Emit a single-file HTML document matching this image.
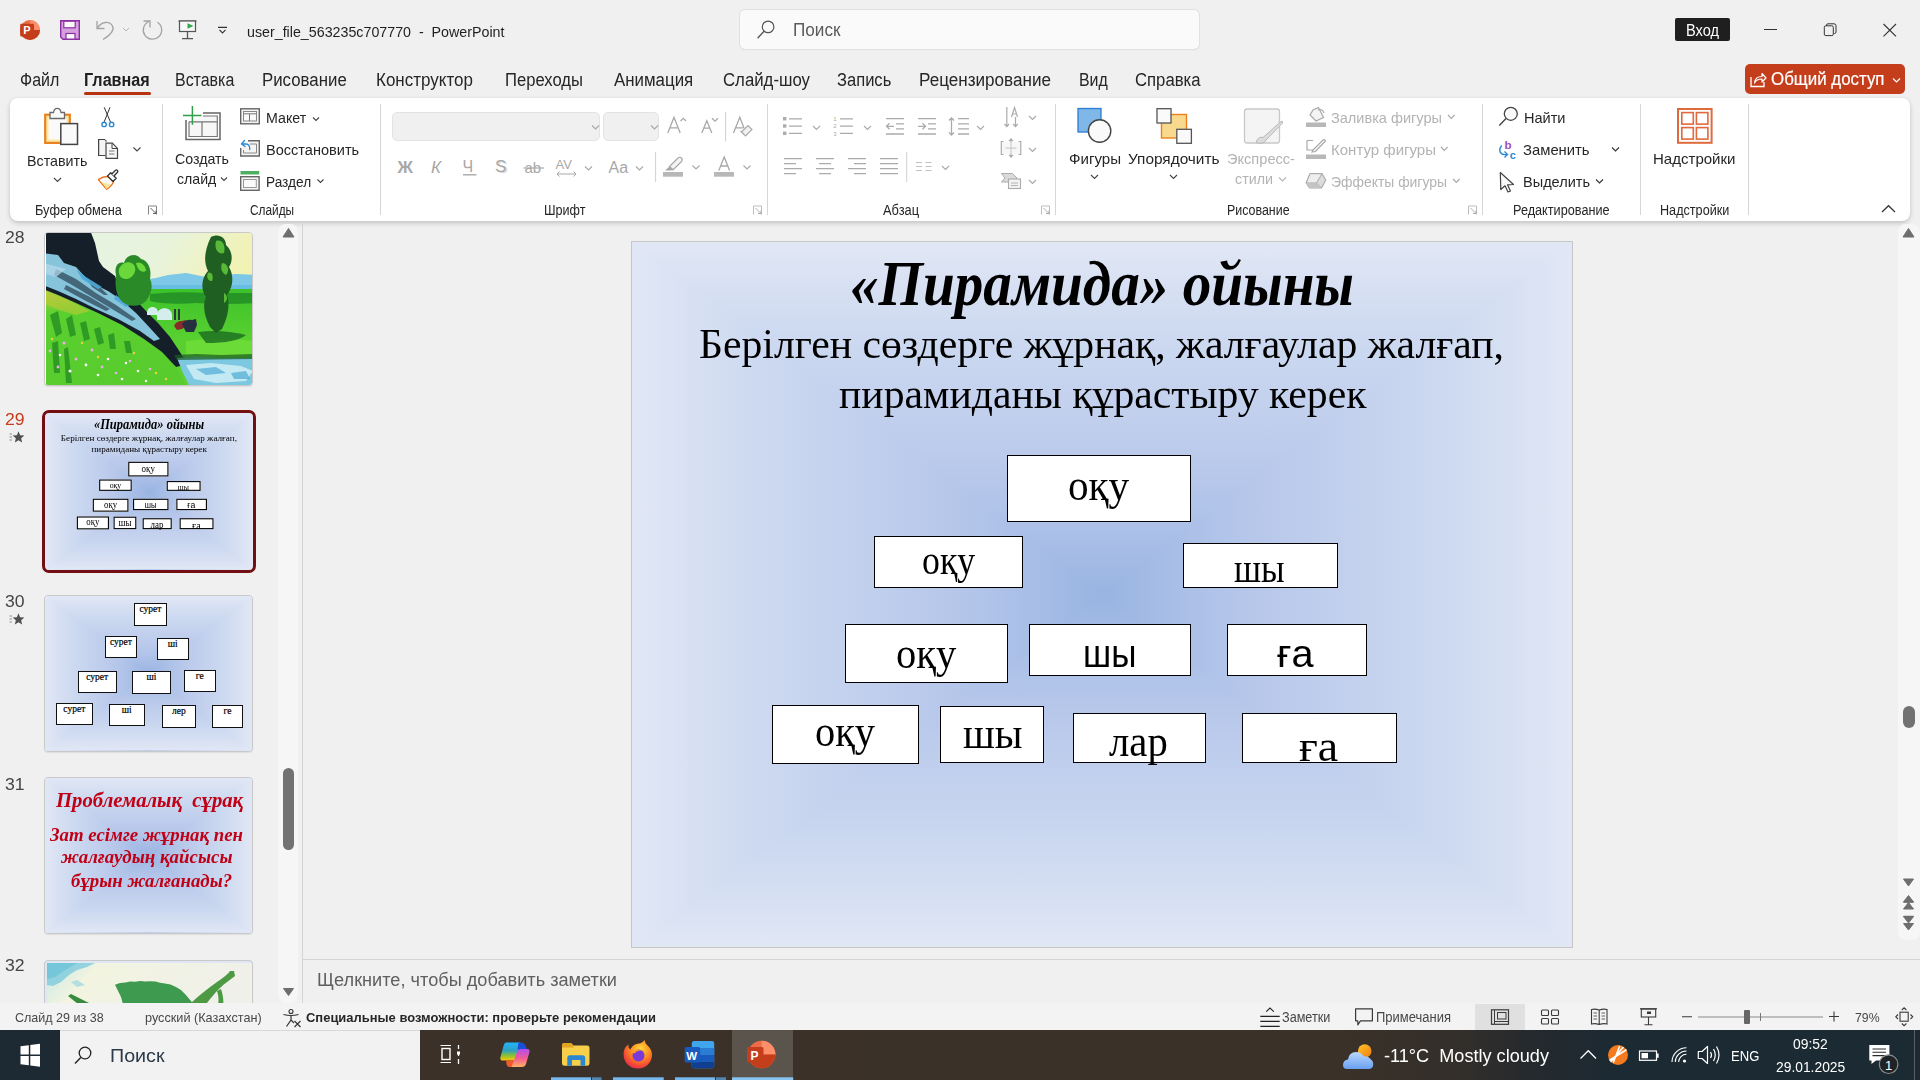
<!DOCTYPE html>
<html><head><meta charset="utf-8">
<style>
html,body{margin:0;padding:0;}
body{width:1920px;height:1080px;overflow:hidden;position:relative;background:#f0f0f0;font-family:'Liberation Sans',sans-serif;}
.t{position:absolute;white-space:nowrap;line-height:1;transform-origin:0 0;}
.a{position:absolute;}
svg.a{overflow:visible;}
</style></head><body>
<div class="a" style="left:740px;top:10px;width:459px;height:39px;background:#fafafa;border-radius:5px;box-shadow:0 0 0 1px #e1e1e1, 0 1px 1px #d0d0d0;"></div>
<div class="a" style="left:1675px;top:18px;width:55px;height:23px;background:#1f1f1f;border-radius:2px;"></div>
<div class="a" style="left:84px;top:92px;width:67px;height:3px;background:#b7320f;border-radius:2px;"></div>
<div class="a" style="left:1745px;top:64px;width:160px;height:30px;background:#c43e1c;border-radius:5px;"></div>
<div class="a" style="left:10px;top:98px;width:1900px;height:123px;background:#fff;border-radius:8px;box-shadow:0 2px 5px rgba(0,0,0,0.2);"></div>
<div class="a" style="left:162.0px;top:104px;width:1px;height:111px;background:#d6d6d6;"></div>
<div class="a" style="left:379.5px;top:104px;width:1px;height:111px;background:#d6d6d6;"></div>
<div class="a" style="left:767.0px;top:104px;width:1px;height:111px;background:#d6d6d6;"></div>
<div class="a" style="left:1055.0px;top:104px;width:1px;height:111px;background:#d6d6d6;"></div>
<div class="a" style="left:1481.5px;top:104px;width:1px;height:111px;background:#d6d6d6;"></div>
<div class="a" style="left:1640.0px;top:104px;width:1px;height:111px;background:#d6d6d6;"></div>
<div class="a" style="left:1747.5px;top:104px;width:1px;height:111px;background:#d6d6d6;"></div>
<div class="a" style="left:391.5px;top:112px;width:208px;height:29px;background:#f0f0f0;border:1px solid #e3e3e3;border-radius:5px;box-sizing:border-box;"></div>
<div class="a" style="left:602.5px;top:112px;width:56px;height:29px;background:#f0f0f0;border:1px solid #e3e3e3;border-radius:5px;box-sizing:border-box;"></div>
<div class="a" style="left:278px;top:224px;width:20px;height:779px;background:#f6f6f6;border-radius:8px;"></div>
<div class="a" style="left:302px;top:224px;width:1px;height:779px;background:#d4d4d4;"></div>
<div class="a" style="left:283px;top:768px;width:11px;height:82px;background:#727272;border-radius:5.5px;"></div>
<div class="a" style="left:1898px;top:224px;width:22px;height:716px;background:#f6f6f6;border-radius:8px;"></div>
<div class="a" style="left:1903px;top:706px;width:12px;height:22px;background:#727272;border-radius:6px;"></div>
<div class="a" style="left:303px;top:958.5px;width:1617px;height:1.5px;background:#d4d4d4;"></div>
<div class="a" style="left:0;top:1003px;width:1920px;height:27px;background:#f3f3f3;"></div>
<div class="a" style="left:1475px;top:1004px;width:50px;height:26px;background:#e0e0e0;"></div>
<div class="a" style="left:0;top:1030px;width:1920px;height:50px;background:linear-gradient(90deg,#3b3129 0%,#3b3129 40%,#3a3128 70%,#332f2b 76%,#24292d 80%,#1c2a33 84%,#1c2a33 100%);"></div>
<div class="a" style="left:0;top:1030px;width:60px;height:50px;background:#1e2a33;"></div>
<div class="a" style="left:60px;top:1030px;width:360px;height:50px;background:#f2f2f2;border-top:1px solid #d8d8d8;box-sizing:border-box;"></div>
<div class="a" style="left:732px;top:1030px;width:61px;height:50px;background:#5b544d;"></div>
<div class="a" style="left:44px;top:231.5px;width:208.7px;height:154.0px;border:1px solid #c9c9c9;border-radius:4px;box-sizing:border-box;overflow:hidden;background:#fff;box-shadow:0 1px 1px rgba(0,0,0,0.08);"><div class="a" style="left:0.5px;top:0.5px;width:207px;height:153px;"><svg width="207" height="153" viewBox="0 0 207 153" style="position:absolute;left:0;top:0;filter:blur(0.45px)">
<defs>
<linearGradient id="sky" x1="0" y1="0" x2="1" y2="0.5"><stop offset="0" stop-color="#e4f4e4"/><stop offset="0.5" stop-color="#e8f3dc"/><stop offset="0.8" stop-color="#f1f2b8"/><stop offset="1" stop-color="#f2f0a8"/></linearGradient>
<linearGradient id="mead" x1="0" y1="0" x2="0" y2="1"><stop offset="0" stop-color="#3cc22a"/><stop offset="0.5" stop-color="#58d030"/><stop offset="1" stop-color="#60d030"/></linearGradient>
<linearGradient id="gr" x1="0" y1="0" x2="0.3" y2="1"><stop offset="0" stop-color="#b0d040"/><stop offset="0.25" stop-color="#5ad030"/><stop offset="1" stop-color="#58cc2c"/></linearGradient>
<filter id="soft" x="-5%" y="-5%" width="110%" height="110%"><feGaussianBlur stdDeviation="0.7"/></filter>
</defs>
<g>
<rect x="-3" y="-3" width="213" height="160" fill="url(#sky)"/>
<path d="M95 47 L110 45 L122 42 L140 40 L160 44 L175 42 L190 41 L210 42 L210 58 L95 58Z" fill="#7cc8e6"/>
<path d="M95 52 L210 52 L210 58 L95 58Z" fill="#5ab8e0" opacity="0.6"/>
<path d="M90 56 L210 56 L210 156 L90 156Z" fill="url(#mead)"/>
<path d="M104 61 Q130 58 160 60 L210 60 L210 70 Q180 72 150 70 Q120 72 104 68Z" fill="#1f8a26" opacity="0.8"/>
<path d="M140 108 Q175 104 210 108 L210 124 L140 124Z" fill="#74e03a" opacity="0.7"/>
<path d="M152 99 Q175 96 200 102 Q190 110 160 110Z" fill="#1a6a22" opacity="0.8"/>
<path d="M-3 -3 L44 -3 L49 10 L53 28 L57 34 L69 43 L73 54 L85 62 L100 78 L112 90 L124 104 L132 116 L137 124 L142 131 L130 134 L112 120 L88 104 L62 90 L36 78 L12 68 L-3 64Z" fill="#151f2a"/>
<path d="M-3 20 L12 22 L18 30 L30 34 L40 45 L50 52 L62 58 L74 66 L90 80 L104 95 L114 106 L108 108 L94 98 L72 86 L50 76 L30 66 L12 58 L-3 52Z" fill="#86c4dc"/>
<path d="M10 36 L30 46 L50 60 L70 72 L90 86 L86 88 L66 76 L46 64 L26 52 L8 42Z M20 52 L44 64 L64 76 L60 78 L40 68 L18 56Z M40 44 L52 52 L62 62 L58 62 L46 54Z" fill="#2a4050" opacity="0.7"/><path d="M-3 30 L20 36 L10 44 L-3 40Z" fill="#b8dcec" opacity="0.7"/>
<path d="M30 36 L40 44 L56 54 L52 56 L36 46Z M70 62 L84 72 L80 74 L68 66Z" fill="#4aa8d8" opacity="0.9"/>
<path d="M-3 56 L12 62 L30 70 L52 80 L76 92 L98 106 L116 119 L130 134 L136 145 L142 156 L-3 156Z" fill="url(#gr)"/>
<path d="M-3 58 L20 66 L44 78 L30 82 L10 76 L-3 70Z" fill="#c8c838" opacity="0.55"/>
<path d="M4 82 L12 78 L16 100 L10 104Z M20 86 L26 82 L30 102 L24 104Z M34 90 L40 88 L44 106 L38 108Z M48 96 L54 94 L58 110 L52 112Z M62 102 L68 100 L70 116 L64 116Z M78 108 L84 108 L86 120 L80 120Z M6 110 L12 108 L14 140 L8 140Z M18 116 L22 114 L26 150 L20 150Z" fill="#228a22" opacity="0.75"/>
<path d="M70 42 C68 34 72 28 78 30 C80 22 90 19 95 26 C102 27 106 36 104 46 C108 54 104 62 100 68 C94 74 84 74 78 70 C72 66 68 56 70 42Z" fill="#2a8a28"/>
<path d="M73 36 C76 29 84 27 88 32 C92 38 86 46 80 46 C75 46 72 42 73 36Z M90 30 C94 28 100 32 100 38 C96 40 92 38 90 30Z" fill="#6ad83a"/>
<path d="M101 80 C101 72 112 72 112 80 L112 82 L101 82Z M111 82 C111 73 126 73 126 82 L126 87 L111 87Z" fill="#d4eeee"/>
<path d="M128 76 H130 V87 H128Z M132 76 H134 V87 H132Z" fill="#2a3a3a"/>
<path d="M128 93 Q130 88 136 88 L140 87 L141 93 L136 96 L131 97Z" fill="#8a2a2a"/>
<path d="M136 91 Q140 86 146 87 L150 86 L151 92 L148 99 L140 99Z" fill="#253040"/>
<path d="M165 4 C172 0 180 4 180 12 C187 18 187 28 183 34 C189 44 186 56 181 62 C185 74 180 88 176 96 L170 100 L164 94 C159 84 156 74 160 64 C154 56 156 44 162 38 C157 28 159 16 165 4Z" fill="#1f5f22"/>
<path d="M170 8 C176 6 180 12 178 20 C172 22 168 16 170 8Z M176 30 C182 30 184 38 180 42 C176 40 174 36 176 30Z M162 40 C166 38 168 44 166 48 C162 48 160 44 162 40Z M178 60 C182 62 182 68 178 70Z" fill="#58b838"/>
<path d="M131 125 L150 124 L175 125 L210 125 L210 156 L145 156 L137 140Z" fill="#7cc8e0"/>
<path d="M140 132 L165 130 L195 133 L207 138 L200 148 L170 150 L148 146Z" fill="#d0eef6" opacity="0.85"/>
<path d="M150 136 L170 134 L180 140 L160 142Z M185 140 L200 138 L204 146 L188 146Z" fill="#3aa0d0" opacity="0.6"/>
<path d="M128 122 L150 121 L175 122 L207 121 L207 126 L131 127Z" fill="#1a5a22" opacity="0.7"/>
</g>
<g fill="#e8b0e8"><circle cx="18" cy="110" r="1.6"/><circle cx="30" cy="126" r="1.5"/><circle cx="46" cy="117" r="1.4"/><circle cx="56" cy="134" r="1.4"/><circle cx="70" cy="140" r="1.3"/><circle cx="12" cy="134" r="1.4"/><circle cx="84" cy="128" r="1.3"/><circle cx="4" cy="118" r="1.4"/><circle cx="104" cy="136" r="1.3"/></g>
<g fill="#ffffff"><circle cx="24" cy="138" r="1.5"/><circle cx="40" cy="132" r="1.4"/><circle cx="62" cy="126" r="1.3"/><circle cx="76" cy="146" r="1.3"/><circle cx="92" cy="138" r="1.3"/><circle cx="100" cy="148" r="1.2"/><circle cx="14" cy="122" r="1.3"/><circle cx="52" cy="142" r="1.3"/><circle cx="80" cy="130" r="1.2"/></g>
<g fill="#f0d040"><circle cx="36" cy="110" r="1.2"/><circle cx="52" cy="124" r="1.2"/><circle cx="88" cy="120" r="1.2"/><circle cx="110" cy="140" r="1.2"/><circle cx="6" cy="106" r="1.2"/><circle cx="120" cy="146" r="1.2"/></g>
</svg></div></div>
<div class="a" style="left:0;top:900px;width:270px;height:103px;overflow:hidden;"><div class="a" style="left:0;top:-900px;"><div class="a" style="left:44px;top:959.5px;width:208.7px;height:50.5px;border:1px solid #c9c9c9;border-radius:4px;box-sizing:border-box;overflow:hidden;background:#dfe6f4;box-shadow:0 1px 1px rgba(0,0,0,0.08);"><div class="a" style="left:2px;top:2px;width:206px;height:45px;"><svg width="206" height="45" viewBox="0 0 206 45" style="position:absolute;left:0;top:0">
<defs><linearGradient id="lsky" x1="0" y1="0" x2="1" y2="0.2"><stop offset="0" stop-color="#c8e8e8"/><stop offset="0.25" stop-color="#f2f4e0"/><stop offset="1" stop-color="#f0f0ea"/></linearGradient></defs>
<rect width="206" height="45" fill="url(#lsky)"/>
<path d="M0 0 L48 0 L40 4 L30 7 L22 12 L14 19 L6 23 L0 22Z" fill="#78c8dc" opacity="0.75"/><path d="M0 0 L30 0 L20 6 L8 14 L0 16Z" fill="#5cbcd6" opacity="0.5"/>
<path d="M24 19 L30 17 L38 22 L30 24Z" fill="#9ad6e0" opacity="0.7"/>
<path d="M68 21.7 L73 20 L78.5 19.5 L83 18.5 L88 18.8 L93.5 18 L98 18.6 L103 18.3 L108.5 18.5 L113 19.8 L118 20.4 L123.5 21.5 L129 24 L134 27 L138.5 31.5 L144.8 38.9 L147 45 L77 45 L74 34Z" fill="#3e9a4e"/>
<path d="M142 42 C150 34 160 26 170 19 C176 15 181 11 183 8 L187 8 L188 13 C184 16 178 20 172 26 C166 32 160 40 156 45 L146 45Z" fill="#4e9a44"/>
<path d="M170 28 C172 34 172 40 170 45 L176 45 C177 38 176 32 174 26Z" fill="#4e9a44"/>
<path d="M21 33 L24 31 L44 41 L42 45 L36 45Z" fill="#3a8a40"/>
</svg></div></div></div></div>
<div class="a" style="left:44px;top:595px;width:208.7px;height:156.5px;border:1px solid #c9c9c9;border-radius:4px;box-sizing:border-box;overflow:hidden;background:#e1e7f5;box-shadow:0 1px 1px rgba(0,0,0,0.08);"><div class="a" style="left:0;top:0;right:0;bottom:0;background:linear-gradient(90deg,#e1e7f5 0.0%,#cbd8f0 15.0%,#bccbec 30.0%,#adc1e8 40.0%,#99b4e2 50.0%,#adc1e8 60.0%,#bccbec 70.0%,#cbd8f0 85.0%,#e1e7f5 100.0%);"></div><div class="a" style="left:0;top:0;right:0;bottom:0;background:linear-gradient(180deg,#e1e7f5 0.0%,#cbd8f0 15.0%,#bccbec 30.0%,#adc1e8 40.0%,#99b4e2 50.0%,#adc1e8 60.0%,#bccbec 70.0%,#cbd8f0 85.0%,#e1e7f5 100.0%);clip-path:polygon(0 0,100% 0,50% 50%,100% 100%,0 100%,50% 50%);"></div><div class="a" style="left:88.9px;top:6.9px;width:33.0px;height:23.1px;background:#fff;border:1px solid #111;box-sizing:border-box;font:9.5px/1 'Liberation Serif',serif;color:#000;text-align:center;padding-top:1px;-webkit-text-stroke:0.2px #000;">сурет</div><div class="a" style="left:59.8px;top:40.0px;width:32.2px;height:21.8px;background:#fff;border:1px solid #111;box-sizing:border-box;font:9.5px/1 'Liberation Serif',serif;color:#000;text-align:center;padding-top:1px;-webkit-text-stroke:0.2px #000;">сурет</div><div class="a" style="left:111.5px;top:42.0px;width:32.3px;height:21.8px;background:#fff;border:1px solid #111;box-sizing:border-box;font:9.5px/1 'Liberation Serif',serif;color:#000;text-align:center;padding-top:1px;-webkit-text-stroke:0.2px #000;">шi</div><div class="a" style="left:32.7px;top:74.6px;width:39.0px;height:22.7px;background:#fff;border:1px solid #111;box-sizing:border-box;font:9.5px/1 'Liberation Serif',serif;color:#000;text-align:center;padding-top:1px;-webkit-text-stroke:0.2px #000;">сурет</div><div class="a" style="left:86.9px;top:75.4px;width:39.0px;height:23.1px;background:#fff;border:1px solid #111;box-sizing:border-box;font:9.5px/1 'Liberation Serif',serif;color:#000;text-align:center;padding-top:1px;-webkit-text-stroke:0.2px #000;">шi</div><div class="a" style="left:138.6px;top:73.8px;width:32.3px;height:22.7px;background:#fff;border:1px solid #111;box-sizing:border-box;font:9.5px/1 'Liberation Serif',serif;color:#000;text-align:center;padding-top:1px;-webkit-text-stroke:0.2px #000;">ге</div><div class="a" style="left:10.8px;top:107.2px;width:37.1px;height:21.9px;background:#fff;border:1px solid #111;box-sizing:border-box;font:9.5px/1 'Liberation Serif',serif;color:#000;text-align:center;padding-top:1px;-webkit-text-stroke:0.2px #000;">сурет</div><div class="a" style="left:63.8px;top:108.4px;width:35.8px;height:21.9px;background:#fff;border:1px solid #111;box-sizing:border-box;font:9.5px/1 'Liberation Serif',serif;color:#000;text-align:center;padding-top:1px;-webkit-text-stroke:0.2px #000;">шi</div><div class="a" style="left:116.7px;top:109.2px;width:34.3px;height:23.1px;background:#fff;border:1px solid #111;box-sizing:border-box;font:9.5px/1 'Liberation Serif',serif;color:#000;text-align:center;padding-top:1px;-webkit-text-stroke:0.2px #000;">лер</div><div class="a" style="left:166.9px;top:109.2px;width:31.4px;height:23.1px;background:#fff;border:1px solid #111;box-sizing:border-box;font:9.5px/1 'Liberation Serif',serif;color:#000;text-align:center;padding-top:1px;-webkit-text-stroke:0.2px #000;">ге</div></div>
<div class="a" style="left:44px;top:777px;width:208.7px;height:156.5px;border:1px solid #c9c9c9;border-radius:4px;box-sizing:border-box;overflow:hidden;background:#e1e7f5;box-shadow:0 1px 1px rgba(0,0,0,0.08);"><div class="a" style="left:0;top:0;right:0;bottom:0;background:linear-gradient(90deg,#e1e7f5 0.0%,#cbd8f0 15.0%,#bccbec 30.0%,#adc1e8 40.0%,#99b4e2 50.0%,#adc1e8 60.0%,#bccbec 70.0%,#cbd8f0 85.0%,#e1e7f5 100.0%);"></div><div class="a" style="left:0;top:0;right:0;bottom:0;background:linear-gradient(180deg,#e1e7f5 0.0%,#cbd8f0 15.0%,#bccbec 30.0%,#adc1e8 40.0%,#99b4e2 50.0%,#adc1e8 60.0%,#bccbec 70.0%,#cbd8f0 85.0%,#e1e7f5 100.0%);clip-path:polygon(0 0,100% 0,50% 50%,100% 100%,0 100%,50% 50%);"></div></div>
<div class="a" style="left:631px;top:241px;width:942px;height:707px;border:1px solid #c6c6c6;box-sizing:border-box;overflow:hidden;"><div class="a" style="left:-1px;top:-1px;width:942px;height:707px;"><div class="a" style="left:0;top:0;right:0;bottom:0;background:linear-gradient(90deg,#e1e7f5 0.0%,#cbd8f0 15.0%,#bccbec 30.0%,#adc1e8 40.0%,#99b4e2 50.0%,#adc1e8 60.0%,#bccbec 70.0%,#cbd8f0 85.0%,#e1e7f5 100.0%);"></div><div class="a" style="left:0;top:0;right:0;bottom:0;background:linear-gradient(180deg,#e1e7f5 0.0%,#cbd8f0 15.0%,#bccbec 30.0%,#adc1e8 40.0%,#99b4e2 50.0%,#adc1e8 60.0%,#bccbec 70.0%,#cbd8f0 85.0%,#e1e7f5 100.0%);clip-path:polygon(0 0,100% 0,50% 50%,100% 100%,0 100%,50% 50%);"></div><div class="a" style="left:376.20000000000005px;top:214px;width:183.5px;height:66.5px;background:#fff;border:1.5px solid #000;box-sizing:border-box;"></div><div class="a" style="left:243px;top:295px;width:148.60000000000002px;height:51.799999999999955px;background:#fff;border:1.5px solid #000;box-sizing:border-box;"></div><div class="a" style="left:552px;top:302px;width:154.5px;height:44.799999999999955px;background:#fff;border:1.5px solid #000;box-sizing:border-box;"></div><div class="a" style="left:214px;top:383px;width:162.5px;height:59.39999999999998px;background:#fff;border:1.5px solid #000;box-sizing:border-box;"></div><div class="a" style="left:398px;top:383px;width:161.70000000000005px;height:51.5px;background:#fff;border:1.5px solid #000;box-sizing:border-box;"></div><div class="a" style="left:595.8px;top:383px;width:139.9000000000001px;height:51.5px;background:#fff;border:1.5px solid #000;box-sizing:border-box;"></div><div class="a" style="left:141px;top:464px;width:146.79999999999995px;height:58.5px;background:#fff;border:1.5px solid #000;box-sizing:border-box;"></div><div class="a" style="left:309px;top:464.5px;width:103.75px;height:57.5px;background:#fff;border:1.5px solid #000;box-sizing:border-box;"></div><div class="a" style="left:442px;top:471.5px;width:132.75px;height:50.5px;background:#fff;border:1.5px solid #000;box-sizing:border-box;"></div><div class="a" style="left:611px;top:471.5px;width:154.5px;height:50.5px;background:#fff;border:1.5px solid #000;box-sizing:border-box;"></div><div class="t" id="t57" style="left:219.00px;top:11.71px;font-size:63px;font-family:'Liberation Serif', serif;color:#000;font-weight:700;font-style:italic;transform:scaleX(0.9070);">«Пирамида» ойыны</div><div class="t" id="t58" style="left:68.00px;top:81.64px;font-size:42px;font-family:'Liberation Serif', serif;color:#000;transform:scaleX(0.9929);">Берілген сөздерге жұрнақ, жалғаулар жалғап,</div><div class="t" id="t59" style="left:207.50px;top:131.64px;font-size:42px;font-family:'Liberation Serif', serif;color:#000;transform:scaleX(0.9932);">пирамиданы құрастыру керек</div><div class="t" id="t60" style="left:436.70px;top:221.65px;font-size:45px;font-family:'Liberation Serif', serif;color:#000;transform:scaleX(0.9151);">оқу</div><div class="t" id="t61" style="left:290.60px;top:298.97px;font-size:41px;font-family:'Liberation Serif', serif;color:#000;transform:scaleX(0.8732);">оқу</div><div class="t" id="t62" style="left:603.40px;top:306.14px;font-size:42px;font-family:'Liberation Serif', serif;color:#000;transform:scaleX(0.8355);">шы</div><div class="t" id="t63" style="left:264.80px;top:390.25px;font-size:45px;font-family:'Liberation Serif', serif;color:#000;transform:scaleX(0.9002);">оқу</div><div class="t" id="t64" style="left:452.00px;top:392.75px;font-size:39px;font-family:'Liberation Sans', sans-serif;color:#000;transform:scaleX(0.9001);">шы</div><div class="t" id="t65" style="left:646.40px;top:392.75px;font-size:39px;font-family:'Liberation Sans', sans-serif;color:#000;transform:scaleX(1.0189);">ға</div><div class="t" id="t66" style="left:184.00px;top:469.48px;font-size:44px;font-family:'Liberation Serif', serif;color:#000;transform:scaleX(0.9176);">оқу</div><div class="t" id="t67" style="left:331.50px;top:470.40px;font-size:45px;font-family:'Liberation Serif', serif;color:#000;transform:scaleX(0.9169);">шы</div><div class="t" id="t68" style="left:477.75px;top:478.89px;font-size:43.5px;font-family:'Liberation Serif', serif;color:#000;transform:scaleX(0.9360);">лар</div><div class="t" id="t69" style="left:667.75px;top:482.90px;font-size:45px;font-family:'Liberation Serif', serif;color:#000;transform:scaleX(1.0211);">ға</div></div></div>
<div class="a" style="left:41.5px;top:410px;width:214px;height:162.5px;border:3px solid #730f12;border-radius:7px;box-sizing:border-box;overflow:hidden;background:#e1e7f5;"><div class="a" style="left:1px;top:1.5px;width:942px;height:707px;transform:scale(0.21868);transform-origin:0 0;"><div class="a" style="left:0;top:0;right:0;bottom:0;background:linear-gradient(90deg,#e1e7f5 0.0%,#cbd8f0 15.0%,#bccbec 30.0%,#adc1e8 40.0%,#99b4e2 50.0%,#adc1e8 60.0%,#bccbec 70.0%,#cbd8f0 85.0%,#e1e7f5 100.0%);"></div><div class="a" style="left:0;top:0;right:0;bottom:0;background:linear-gradient(180deg,#e1e7f5 0.0%,#cbd8f0 15.0%,#bccbec 30.0%,#adc1e8 40.0%,#99b4e2 50.0%,#adc1e8 60.0%,#bccbec 70.0%,#cbd8f0 85.0%,#e1e7f5 100.0%);clip-path:polygon(0 0,100% 0,50% 50%,100% 100%,0 100%,50% 50%);"></div><div class="a" style="left:376.20000000000005px;top:214px;width:183.5px;height:66.5px;background:#fff;border:5px solid #000;box-sizing:border-box;"></div><div class="a" style="left:243px;top:295px;width:148.60000000000002px;height:51.799999999999955px;background:#fff;border:5px solid #000;box-sizing:border-box;"></div><div class="a" style="left:552px;top:302px;width:154.5px;height:44.799999999999955px;background:#fff;border:5px solid #000;box-sizing:border-box;"></div><div class="a" style="left:214px;top:383px;width:162.5px;height:59.39999999999998px;background:#fff;border:5px solid #000;box-sizing:border-box;"></div><div class="a" style="left:398px;top:383px;width:161.70000000000005px;height:51.5px;background:#fff;border:5px solid #000;box-sizing:border-box;"></div><div class="a" style="left:595.8px;top:383px;width:139.9000000000001px;height:51.5px;background:#fff;border:5px solid #000;box-sizing:border-box;"></div><div class="a" style="left:141px;top:464px;width:146.79999999999995px;height:58.5px;background:#fff;border:5px solid #000;box-sizing:border-box;"></div><div class="a" style="left:309px;top:464.5px;width:103.75px;height:57.5px;background:#fff;border:5px solid #000;box-sizing:border-box;"></div><div class="a" style="left:442px;top:471.5px;width:132.75px;height:50.5px;background:#fff;border:5px solid #000;box-sizing:border-box;"></div><div class="a" style="left:611px;top:471.5px;width:154.5px;height:50.5px;background:#fff;border:5px solid #000;box-sizing:border-box;"></div><div class="t" style="left:219.00px;top:11.71px;font-size:63px;font-family:'Liberation Serif', serif;color:#000;font-weight:700;font-style:italic;transform:scaleX(0.9070);">«Пирамида» ойыны</div><div class="t" style="left:68.00px;top:81.64px;font-size:42px;font-family:'Liberation Serif', serif;color:#000;transform:scaleX(0.9929);">Берілген сөздерге жұрнақ, жалғаулар жалғап,</div><div class="t" style="left:207.50px;top:131.64px;font-size:42px;font-family:'Liberation Serif', serif;color:#000;transform:scaleX(0.9932);">пирамиданы құрастыру керек</div><div class="t" style="left:436.70px;top:221.65px;font-size:45px;font-family:'Liberation Serif', serif;color:#000;transform:scaleX(0.9151);">оқу</div><div class="t" style="left:290.60px;top:298.97px;font-size:41px;font-family:'Liberation Serif', serif;color:#000;transform:scaleX(0.8732);">оқу</div><div class="t" style="left:603.40px;top:306.14px;font-size:42px;font-family:'Liberation Serif', serif;color:#000;transform:scaleX(0.8355);">шы</div><div class="t" style="left:264.80px;top:390.25px;font-size:45px;font-family:'Liberation Serif', serif;color:#000;transform:scaleX(0.9002);">оқу</div><div class="t" style="left:452.00px;top:392.75px;font-size:39px;font-family:'Liberation Sans', sans-serif;color:#000;transform:scaleX(0.9001);">шы</div><div class="t" style="left:646.40px;top:392.75px;font-size:39px;font-family:'Liberation Sans', sans-serif;color:#000;transform:scaleX(1.0189);">ға</div><div class="t" style="left:184.00px;top:469.48px;font-size:44px;font-family:'Liberation Serif', serif;color:#000;transform:scaleX(0.9176);">оқу</div><div class="t" style="left:331.50px;top:470.40px;font-size:45px;font-family:'Liberation Serif', serif;color:#000;transform:scaleX(0.9169);">шы</div><div class="t" style="left:477.75px;top:478.89px;font-size:43.5px;font-family:'Liberation Serif', serif;color:#000;transform:scaleX(0.9360);">лар</div><div class="t" style="left:667.75px;top:482.90px;font-size:45px;font-family:'Liberation Serif', serif;color:#000;transform:scaleX(1.0211);">ға</div></div></div>
<div class="t" id="t0" style="left:247.00px;top:23.75px;font-size:15px;font-family:'Liberation Sans', sans-serif;color:#1f1f1f;transform:scaleX(0.9501);">user_file_563235c707770&nbsp;&nbsp;-&nbsp;&nbsp;PowerPoint</div>
<div class="t" id="t1" style="left:792.50px;top:20.70px;font-size:18px;font-family:'Liberation Sans', sans-serif;color:#5c5c5c;transform:scaleX(0.9521);">Поиск</div>
<div class="t" id="t2" style="left:1686.00px;top:22.90px;font-size:16px;font-family:'Liberation Sans', sans-serif;color:#ffffff;transform:scaleX(0.9115);">Вход</div>
<div class="t" id="t3" style="left:19.50px;top:71.20px;font-size:18px;font-family:'Liberation Sans', sans-serif;color:#262626;transform:scaleX(0.8867);">Файл</div>
<div class="t" id="t4" style="left:175.00px;top:71.20px;font-size:18px;font-family:'Liberation Sans', sans-serif;color:#262626;transform:scaleX(0.8856);">Вставка</div>
<div class="t" id="t5" style="left:262.00px;top:71.20px;font-size:18px;font-family:'Liberation Sans', sans-serif;color:#262626;transform:scaleX(0.9349);">Рисование</div>
<div class="t" id="t6" style="left:376.25px;top:71.20px;font-size:18px;font-family:'Liberation Sans', sans-serif;color:#262626;transform:scaleX(0.9450);">Конструктор</div>
<div class="t" id="t7" style="left:504.50px;top:71.20px;font-size:18px;font-family:'Liberation Sans', sans-serif;color:#262626;transform:scaleX(0.9238);">Переходы</div>
<div class="t" id="t8" style="left:613.75px;top:71.20px;font-size:18px;font-family:'Liberation Sans', sans-serif;color:#262626;transform:scaleX(0.9379);">Анимация</div>
<div class="t" id="t9" style="left:723.00px;top:71.20px;font-size:18px;font-family:'Liberation Sans', sans-serif;color:#262626;transform:scaleX(0.9322);">Слайд-шоу</div>
<div class="t" id="t10" style="left:837.00px;top:71.20px;font-size:18px;font-family:'Liberation Sans', sans-serif;color:#262626;transform:scaleX(0.9185);">Запись</div>
<div class="t" id="t11" style="left:919.25px;top:71.20px;font-size:18px;font-family:'Liberation Sans', sans-serif;color:#262626;transform:scaleX(0.9496);">Рецензирование</div>
<div class="t" id="t12" style="left:1079.25px;top:71.20px;font-size:18px;font-family:'Liberation Sans', sans-serif;color:#262626;transform:scaleX(0.8825);">Вид</div>
<div class="t" id="t13" style="left:1135.00px;top:71.20px;font-size:18px;font-family:'Liberation Sans', sans-serif;color:#262626;transform:scaleX(0.9274);">Справка</div>
<div class="t" id="t14" style="left:84.25px;top:71.20px;font-size:18px;font-family:'Liberation Sans', sans-serif;color:#1f1f1f;font-weight:700;transform:scaleX(0.8980);">Главная</div>
<div class="t" id="t15" style="left:1771.00px;top:70.20px;font-size:18px;font-family:'Liberation Sans', sans-serif;color:#ffffff;transform:scaleX(0.9385);-webkit-text-stroke:0.2px #fff;">Общий доступ</div>
<div class="t" id="t16" style="left:27.00px;top:153.25px;font-size:15px;font-family:'Liberation Sans', sans-serif;color:#262626;transform:scaleX(0.9514);">Вставить</div>
<div class="t" id="t17" style="left:35.00px;top:202.60px;font-size:14px;font-family:'Liberation Sans', sans-serif;color:#262626;transform:scaleX(0.9144);">Буфер обмена</div>
<div class="t" id="t18" style="left:175.00px;top:151.25px;font-size:15px;font-family:'Liberation Sans', sans-serif;color:#262626;transform:scaleX(0.9471);">Создать</div>
<div class="t" id="t19" style="left:176.70px;top:171.25px;font-size:15px;font-family:'Liberation Sans', sans-serif;color:#262626;transform:scaleX(0.9417);">слайд</div>
<div class="t" id="t20" style="left:265.80px;top:109.62px;font-size:15.5px;font-family:'Liberation Sans', sans-serif;color:#262626;transform:scaleX(0.9162);">Макет</div>
<div class="t" id="t21" style="left:265.80px;top:141.72px;font-size:15.5px;font-family:'Liberation Sans', sans-serif;color:#262626;transform:scaleX(0.9389);">Восстановить</div>
<div class="t" id="t22" style="left:265.80px;top:173.82px;font-size:15.5px;font-family:'Liberation Sans', sans-serif;color:#262626;transform:scaleX(0.8822);">Раздел</div>
<div class="t" id="t23" style="left:249.60px;top:202.60px;font-size:14px;font-family:'Liberation Sans', sans-serif;color:#262626;transform:scaleX(0.8470);">Слайды</div>
<div class="t" id="t24" style="left:543.50px;top:202.60px;font-size:14px;font-family:'Liberation Sans', sans-serif;color:#262626;transform:scaleX(0.9009);">Шрифт</div>
<div class="t" id="t25" style="left:883.00px;top:202.60px;font-size:14px;font-family:'Liberation Sans', sans-serif;color:#262626;transform:scaleX(0.9165);">Абзац</div>
<div class="t" id="t26" style="left:1068.50px;top:150.75px;font-size:15px;font-family:'Liberation Sans', sans-serif;color:#262626;transform:scaleX(1.0054);">Фигуры</div>
<div class="t" id="t27" style="left:1128.00px;top:150.75px;font-size:15px;font-family:'Liberation Sans', sans-serif;color:#262626;transform:scaleX(1.0250);">Упорядочить</div>
<div class="t" id="t28" style="left:1227.00px;top:150.75px;font-size:15px;font-family:'Liberation Sans', sans-serif;color:#b3b3b3;transform:scaleX(0.9738);">Экспресс-</div>
<div class="t" id="t29" style="left:1235.00px;top:170.75px;font-size:15px;font-family:'Liberation Sans', sans-serif;color:#b3b3b3;transform:scaleX(0.9526);">стили</div>
<div class="t" id="t30" style="left:1331.00px;top:110.25px;font-size:15px;font-family:'Liberation Sans', sans-serif;color:#b3b3b3;transform:scaleX(0.9689);">Заливка фигуры</div>
<div class="t" id="t31" style="left:1331.00px;top:142.25px;font-size:15px;font-family:'Liberation Sans', sans-serif;color:#b3b3b3;transform:scaleX(1.0010);">Контур фигуры</div>
<div class="t" id="t32" style="left:1331.00px;top:174.25px;font-size:15px;font-family:'Liberation Sans', sans-serif;color:#b3b3b3;transform:scaleX(0.9279);">Эффекты фигуры</div>
<div class="t" id="t33" style="left:1227.00px;top:202.60px;font-size:14px;font-family:'Liberation Sans', sans-serif;color:#262626;transform:scaleX(0.8877);">Рисование</div>
<div class="t" id="t34" style="left:1523.50px;top:109.75px;font-size:15px;font-family:'Liberation Sans', sans-serif;color:#262626;transform:scaleX(0.9693);">Найти</div>
<div class="t" id="t35" style="left:1523.00px;top:142.25px;font-size:15px;font-family:'Liberation Sans', sans-serif;color:#262626;transform:scaleX(0.9880);">Заменить</div>
<div class="t" id="t36" style="left:1523.00px;top:174.25px;font-size:15px;font-family:'Liberation Sans', sans-serif;color:#262626;transform:scaleX(0.9682);">Выделить</div>
<div class="t" id="t37" style="left:1513.00px;top:202.60px;font-size:14px;font-family:'Liberation Sans', sans-serif;color:#262626;transform:scaleX(0.9057);">Редактирование</div>
<div class="t" id="t38" style="left:1653.00px;top:150.75px;font-size:15px;font-family:'Liberation Sans', sans-serif;color:#262626;transform:scaleX(1.0023);">Надстройки</div>
<div class="t" id="t39" style="left:1659.50px;top:202.60px;font-size:14px;font-family:'Liberation Sans', sans-serif;color:#262626;transform:scaleX(0.9020);">Надстройки</div>
<div class="t" id="t40" style="left:5.00px;top:228.55px;font-size:17px;font-family:'Liberation Sans', sans-serif;color:#454545;transform:scaleX(1.0358);">28</div>
<div class="t" id="t41" style="left:5.00px;top:411.05px;font-size:17px;font-family:'Liberation Sans', sans-serif;color:#c43e1c;transform:scaleX(1.0358);">29</div>
<div class="t" id="t42" style="left:5.00px;top:593.05px;font-size:17px;font-family:'Liberation Sans', sans-serif;color:#454545;transform:scaleX(1.0358);">30</div>
<div class="t" id="t43" style="left:5.00px;top:775.55px;font-size:17px;font-family:'Liberation Sans', sans-serif;color:#454545;transform:scaleX(1.0358);">31</div>
<div class="t" id="t44" style="left:5.00px;top:956.55px;font-size:17px;font-family:'Liberation Sans', sans-serif;color:#454545;transform:scaleX(1.0358);">32</div>
<div class="t" id="t45" style="left:317.00px;top:970.70px;font-size:18px;font-family:'Liberation Sans', sans-serif;color:#5f5f5f;transform:scaleX(1.0091);">Щелкните, чтобы добавить заметки</div>
<div class="t" id="t46" style="left:15.30px;top:1010.95px;font-size:13px;font-family:'Liberation Sans', sans-serif;color:#474747;transform:scaleX(0.9638);">Слайд 29 из 38</div>
<div class="t" id="t47" style="left:145.00px;top:1010.95px;font-size:13px;font-family:'Liberation Sans', sans-serif;color:#474747;transform:scaleX(0.9746);">русский (Казахстан)</div>
<div class="t" id="t48" style="left:305.50px;top:1010.95px;font-size:13px;font-family:'Liberation Sans', sans-serif;color:#262626;font-weight:700;transform:scaleX(0.9964);">Специальные возможности: проверьте рекомендации</div>
<div class="t" id="t49" style="left:1281.50px;top:1010.10px;font-size:14px;font-family:'Liberation Sans', sans-serif;color:#474747;transform:scaleX(0.9020);">Заметки</div>
<div class="t" id="t50" style="left:1376.00px;top:1010.10px;font-size:14px;font-family:'Liberation Sans', sans-serif;color:#474747;transform:scaleX(0.9279);">Примечания</div>
<div class="t" id="t51" style="left:1855.00px;top:1010.95px;font-size:13px;font-family:'Liberation Sans', sans-serif;color:#474747;transform:scaleX(0.9450);">79%</div>
<div class="t" id="t52" style="left:110.00px;top:1045.85px;font-size:19px;font-family:'Liberation Sans', sans-serif;color:#2c3a4a;transform:scaleX(1.0350);">Поиск</div>
<div class="t" id="t53" style="left:1384.00px;top:1046.15px;font-size:19px;font-family:'Liberation Sans', sans-serif;color:#ffffff;transform:scaleX(0.9536);">-11°C&nbsp;&nbsp;Mostly cloudy</div>
<div class="t" id="t54" style="left:1731.30px;top:1047.62px;font-size:15.5px;font-family:'Liberation Sans', sans-serif;color:#ffffff;transform:scaleX(0.8424);">ENG</div>
<div class="t" id="t55" style="left:1792.70px;top:1036.12px;font-size:15.5px;font-family:'Liberation Sans', sans-serif;color:#ffffff;transform:scaleX(0.8944);">09:52</div>
<div class="t" id="t56" style="left:1776.00px;top:1058.62px;font-size:15.5px;font-family:'Liberation Sans', sans-serif;color:#ffffff;transform:scaleX(0.8920);">29.01.2025</div>
<div class="t" id="t70" style="left:55.70px;top:789.57px;font-size:21px;font-family:'Liberation Serif', serif;color:#c00016;font-weight:700;font-style:italic;transform:scaleX(0.9862);">Проблемалық&nbsp;&nbsp;сұрақ</div>
<div class="t" id="t71" style="left:49.80px;top:825.76px;font-size:18px;font-family:'Liberation Serif', serif;color:#c00016;font-weight:700;font-style:italic;transform:scaleX(1.0454);">Зат есімге жұрнақ пен</div>
<div class="t" id="t72" style="left:60.50px;top:848.46px;font-size:18px;font-family:'Liberation Serif', serif;color:#c00016;font-weight:700;font-style:italic;transform:scaleX(1.0489);">жалғаудың қайсысы</div>
<div class="t" id="t73" style="left:70.90px;top:871.56px;font-size:18px;font-family:'Liberation Serif', serif;color:#c00016;font-weight:700;font-style:italic;transform:scaleX(1.0449);">бұрын жалғанады?</div>
<svg class="a" style="left:0;top:0;pointer-events:none" width="1920" height="1080" viewBox="0 0 1920 1080"><circle cx="30" cy="30" r="10" fill="#ed6c47"/><path d="M30 20 A10 10 0 0 1 40 30 L30 30Z" fill="#ff8f6b"/><path d="M20 30 A10 10 0 0 0 40 30Z" fill="#c43e1c"/><rect x="20.2" y="23.8" width="13.8" height="12.6" rx="1.2" fill="#c43e1c"/><text x="23.2" y="34.3" font-family="Liberation Sans" font-weight="700" font-size="11" fill="#fff">P</text><path d="M60.7 20.7 H79.3 V39.3 H63 L60.7 37Z" fill="#d6a0de" stroke="#8b2ea3" stroke-width="1.4"/><rect x="63.8" y="21.2" width="11.4" height="6.6" fill="#fafafa" stroke="#8b2ea3" stroke-width="1.2"/><rect x="66" y="33.5" width="9" height="5.6" fill="#fafafa" stroke="#8b2ea3" stroke-width="1.2"/><path d="M97 21 V28.5 H104.5" fill="none" stroke="#a3a3a3" stroke-width="1.3"/><path d="M97.5 28 C101 22 109 20 112.5 26 C114.5 30 112 34 103 39.5" fill="none" stroke="#a3a3a3" stroke-width="1.3"/><path d="M123 28 L126 31 L129 28" fill="none" stroke="#b5b5b5" stroke-width="1"/><path d="M149 21.5 A9.2 9.2 0 1 0 157.5 22.3" fill="none" stroke="#a3a3a3" stroke-width="1.3"/><path d="M143.5 21 L150 21 L150 27.5" fill="none" stroke="#a3a3a3" stroke-width="1.3"/><rect x="178.5" y="20.5" width="18" height="1.2" fill="#555"/><rect x="179.5" y="21" width="16" height="10.5" fill="#f7f7f7" stroke="#555" stroke-width="1.2"/><path d="M187.5 23.2 L193.5 26 L187.5 28.8Z" fill="#2ea84a"/><path d="M187.5 31.5 V38.5 M182 38.7 H193" stroke="#555" stroke-width="1.3"/><path d="M218 27.4 H227 M219.5 29.8 L222.5 33 L225.5 29.8" fill="none" stroke="#333" stroke-width="1.1"/><circle cx="768.1" cy="26.9" r="5.8" fill="none" stroke="#555" stroke-width="1.2"/><path d="M764 31.2 L757.6 38.3" stroke="#555" stroke-width="1.3"/><path d="M1764 29.5 H1777" stroke="#333" stroke-width="1"/><rect x="1824.3" y="25.8" width="9" height="9.8" rx="1.5" fill="none" stroke="#333" stroke-width="1"/><path d="M1826.5 25.5 V25 Q1826.5 23.8 1828 23.8 H1834 Q1836 23.8 1836 25.8 V32 Q1836 33.6 1834.3 33.6" fill="none" stroke="#333" stroke-width="1"/><path d="M1883.5 24 L1896 36.3 M1896 24 L1883.5 36.3" stroke="#333" stroke-width="1.1"/><path d="M1751 77 V86.5 H1764 V82" fill="none" stroke="#fff" stroke-width="1.3"/><path d="M1754.5 83 C1755 78 1758 76.5 1762 76.5 V73.5 L1766 78 L1762 82 V79 C1759 79 1756 80 1754.5 83Z" fill="none" stroke="#fff" stroke-width="1.2" stroke-linejoin="round"/><path d="M1893 78.5 L1896.5 82 L1900 78.5" fill="none" stroke="#fff" stroke-width="1.2"/><rect x="45.2" y="114.7" width="24.6" height="28.2" fill="#fde7a5" stroke="#e8821e" stroke-width="2.2"/><rect x="48.5" y="118" width="18" height="21.5" fill="#fafafa"/><path d="M50 118.5 V112.5 H53.5 Q54 108.3 57.3 108.3 Q60.6 108.3 61 112.5 H64.5 V118.5Z" fill="#fafafa" stroke="#6b6b6b" stroke-width="1.3"/><rect x="60.8" y="123.6" width="16.7" height="20.8" fill="#fafafa" stroke="#444" stroke-width="1.5"/><path d="M104.2 107.3 L110.6 122.3 M110 107.3 L104 122.3" stroke="#333" stroke-width="1"/><circle cx="104.1" cy="124.4" r="2.2" fill="none" stroke="#2a8ad4" stroke-width="1.4"/><circle cx="111.6" cy="124.4" r="2.2" fill="none" stroke="#2a8ad4" stroke-width="1.4"/><path d="M98.6 155.5 V139.5 H104.5 L106.5 141.5" fill="#f7f7f7" stroke="#444" stroke-width="1.2"/><rect x="99.2" y="140.2" width="6" height="14.8" fill="#f4f4f4"/><path d="M98.6 140 V155.5 H105.5" fill="none" stroke="#444" stroke-width="1.2"/><path d="M106 158.3 V143.2 H112.3 L117.5 148.4 V158.3Z" fill="#f7f7f7" stroke="#444" stroke-width="1.2"/><path d="M112 143.5 V148.5 H117" fill="none" stroke="#444" stroke-width="1"/><path d="M109 151 H114.5 M109 154 H114.5" stroke="#777" stroke-width="1"/><path d="M133.5 147.5 L137 151 L140.5 147.5" fill="none" stroke="#444" stroke-width="1.1"/><path d="M98.3 179.6 Q103 176.3 108 176.5 L113.5 182 Q112 185.5 106.7 189.3Z" fill="#fafafa" stroke="#e8761e" stroke-width="1.4" stroke-linejoin="round"/><path d="M101.5 182 L106.7 189 L111 184.5Z" fill="#fde39a"/><path d="M107.5 176 L110.7 172.8 L116.2 178.3 L113 181.5Z" fill="#fafafa" stroke="#333" stroke-width="1.3" stroke-linejoin="round"/><path d="M111.8 174 L115.5 170.3 Q116.5 169.5 117.5 170.5 Q118.3 171.5 117.5 172.3 L114 176" fill="#fafafa" stroke="#333" stroke-width="1.3"/><path d="M54 178 L57.5 181.5 L61 178" fill="none" stroke="#444" stroke-width="1.1"/><path d="M148.5 214.5 V206 H156.5 V214.5" fill="none" stroke="#777" stroke-width="0.9"/><path d="M150.5 208 L156 213.5 M153 213.5 H156 V210.5" fill="none" stroke="#555" stroke-width="0.9"/><path d="M186 120 V139.5 H220 V113 H203" fill="none" stroke="#666" stroke-width="1.5"/><path d="M189 121.8 V136.5 H217.3 V116 H203 M189 121.8 H217.3 M202 121.8 V136.5" fill="#f7f7f7" stroke="#777" stroke-width="1.2"/><path d="M183 115.5 H201.5 M192.4 106 V124.8" stroke="#2e9e48" stroke-width="1.5"/><path d="M221 177.5 L224 180.5 L227 177.5" fill="none" stroke="#444" stroke-width="1.1"/><rect x="240.7" y="108.8" width="18.6" height="15" fill="#f5f5f5" stroke="#666" stroke-width="1.4"/><rect x="243.5" y="111.5" width="13" height="9.5" fill="#fafafa" stroke="#888" stroke-width="1"/><path d="M243.5 113.8 H256.5 M249.5 113.8 V121" stroke="#777" stroke-width="1"/><path d="M313 117.5 L316 120.5 L319 117.5" fill="none" stroke="#444" stroke-width="1.1"/><path d="M248 140.7 H259.3 V156 H240.7 V148" fill="#f5f5f5" stroke="#666" stroke-width="1.4"/><path d="M250 144 H256.5 V153 H243.5 V150" fill="none" stroke="#888" stroke-width="1"/><path d="M241.5 144 L244.5 140.5 M241.5 144 L245 146.5 M241.5 144 H246 Q250 144 249.7 149.5" fill="none" stroke="#2a8ad4" stroke-width="1.3" stroke-linecap="round"/><rect x="240.5" y="171" width="18.7" height="3.5" fill="#4caf62"/><rect x="240.7" y="176.7" width="18.4" height="13.6" fill="#f5f5f5" stroke="#666" stroke-width="1.4"/><rect x="243.5" y="179.5" width="12.8" height="8" fill="#fafafa" stroke="#999" stroke-width="1"/><path d="M317.5 179.5 L320.5 182.5 L323.5 179.5" fill="none" stroke="#444" stroke-width="1.1"/><path d="M592 125.5 L595.5 129 L599 125.5 M651 125.5 L654.5 129 L658 125.5" fill="none" stroke="#a8a8a8" stroke-width="1.1"/><path d="M667.8 132.9 L674 117.3 L680.2 132.9 M670 127.9 H678 M680.5 121 L683.3 118.3 L686 121" fill="none" stroke="#a8a8a8" stroke-width="1.3"/><path d="M701.8 132.9 L706.8 120.8 L711.8 132.9 M703.7 128.2 H710 M712 118.3 L715 121.2 L718 118.3" fill="none" stroke="#a8a8a8" stroke-width="1.3"/><path d="M725.6 112 V141.5" stroke="#d0d0d0" stroke-width="1"/><path d="M733.5 132.9 L739.8 117.3 L744 128 M735.5 127.8 H743.5" fill="none" stroke="#a8a8a8" stroke-width="1.3"/><path d="M741.5 132 L748 125.5 L752 129.5 L745.5 136Z M744 134.5 L740.5 131" fill="#f0f0f0" stroke="#a8a8a8" stroke-width="1.1"/><text x="397.5" y="172.5" font-family="Liberation Sans" font-weight="700" font-size="17" fill="#a8a8a8">Ж</text><text x="431" y="172.5" font-family="Liberation Sans" font-style="italic" font-size="17" fill="#a8a8a8">К</text><text x="462.5" y="171.5" font-family="Liberation Sans" font-size="16" fill="#a8a8a8">Ч</text><path d="M463 174.8 H476.5" stroke="#a8a8a8" stroke-width="1.4"/><text x="496.5" y="173" font-family="Liberation Sans" font-size="17" fill="#d8d8d8">S</text><text x="495" y="172" font-family="Liberation Sans" font-size="17" fill="#a8a8a8">S</text><text x="524.5" y="172.5" font-family="Liberation Sans" font-size="15" fill="#a8a8a8">ab</text><path d="M523.5 168 H544" stroke="#a8a8a8" stroke-width="1.2"/><text x="555.5" y="168.5" font-family="Liberation Sans" font-size="13" fill="#a8a8a8">AV</text><path d="M557 174 H576 M559.5 171.5 L557 174 L559.5 176.5 M573.5 171.5 L576 174 L573.5 176.5" fill="none" stroke="#a8a8a8" stroke-width="1"/><path d="M585 166.5 L588.5 170.0 L592 166.5" fill="none" stroke="#a8a8a8" stroke-width="1.1"/><text x="608.5" y="173" font-family="Liberation Sans" font-size="16" fill="#a8a8a8">Aa</text><path d="M636 166.5 L639.5 170.0 L643 166.5" fill="none" stroke="#a8a8a8" stroke-width="1.1"/><path d="M655.6 152 V182" stroke="#d0d0d0" stroke-width="1"/><path d="M669.5 166.5 L678 158 Q680 156.5 681.5 158 Q683 159.5 681.5 161.5 L673 170 Z" fill="#f4f4f4" stroke="#a8a8a8" stroke-width="1.2"/><path d="M669.5 166.5 L665 170.5 L671 170.5 L673 169Z" fill="#a8a8a8"/><rect x="663" y="172" width="20" height="4.7" fill="#b8b8b8"/><path d="M692.5 165.5 L696.0 169.0 L699.5 165.5" fill="none" stroke="#a8a8a8" stroke-width="1.1"/><path d="M718.8 170.5 L724.2 157 L729.6 170.5 M720.7 166 H727.7" fill="none" stroke="#a8a8a8" stroke-width="1.3"/><rect x="714" y="172" width="20" height="4.7" fill="#b8b8b8"/><path d="M743.5 165.5 L747.0 169.0 L750.5 165.5" fill="none" stroke="#a8a8a8" stroke-width="1.1"/><path d="M753.5 214.5 V206 H761.5 V214.5" fill="none" stroke="#b5b5b5" stroke-width="0.9"/><path d="M755.5 208 L761 213.5 M758 213.5 H761 V210.5" fill="none" stroke="#a5a5a5" stroke-width="0.9"/><rect x="783" y="117" width="3.4" height="3.4" fill="#ababab"/><rect x="783" y="124.3" width="3.4" height="3.4" fill="#ababab"/><rect x="783" y="131.6" width="3.4" height="3.4" fill="#ababab"/><path d="M789 118.8 H802 M789 126.1 H802 M789 133.4 H802" stroke="#ababab" stroke-width="1.3"/><path d="M813 126 L816.5 129.5 L820 126" fill="none" stroke="#a8a8a8" stroke-width="1.1"/><text x="833.3" y="121" font-family="Liberation Sans" font-size="6" fill="#ababab">1</text><text x="833.3" y="128.3" font-family="Liberation Sans" font-size="6" fill="#ababab">2</text><text x="833.3" y="135.6" font-family="Liberation Sans" font-size="6" fill="#ababab">3</text><path d="M840 118.8 H853 M840 126.1 H853 M840 133.4 H853" stroke="#ababab" stroke-width="1.3"/><path d="M864 126 L867.5 129.5 L871 126" fill="none" stroke="#a8a8a8" stroke-width="1.1"/><path d="M886 118.6 H904 M896 123.8 H904 M896 128.9 H904 M886 134 H904 M886.5 126.3 H894 M889.5 123.3 L886.5 126.3 L889.5 129.3" fill="none" stroke="#ababab" stroke-width="1.3"/><path d="M918 118.6 H936 M928 123.8 H936 M928 128.9 H936 M918 134 H936 M918 126.3 H925.5 M922.5 123.3 L925.5 126.3 L922.5 129.3" fill="none" stroke="#ababab" stroke-width="1.3"/><path d="M958 118.6 H969 M958 123.8 H969 M958 128.9 H969 M958 134 H969 M951.5 118 V135 M949 120.5 L951.5 118 L954 120.5 M949 132.5 L951.5 135 L954 132.5" fill="none" stroke="#ababab" stroke-width="1.3"/><path d="M977 126 L980.5 129.5 L984 126" fill="none" stroke="#a8a8a8" stroke-width="1.1"/><path d="M1006.8 107 V126.5 M1004.5 124 L1006.8 126.5 L1009.1 124 M1015.5 117 V126.5 M1013.2 124 L1015.5 126.5 L1017.8 124 M1011.5 117 L1014.5 107.5 L1017.5 117 M1012.5 114 H1016.5" fill="none" stroke="#ababab" stroke-width="1.2"/><path d="M1029 116 L1032.5 119.5 L1036 116" fill="none" stroke="#a8a8a8" stroke-width="1.1"/><path d="M1003.5 141.5 H1001.3 V154.5 H1003.5 M1018.5 141.5 H1020.8 V154.5 H1018.5 M1005.5 148.2 H1016.5 M1011 139 V157 M1009 141.2 L1011 139 L1013 141.2 M1009 154.8 L1011 157 L1013 154.8" fill="none" stroke="#ababab" stroke-width="1.2"/><rect x="1002" y="142" width="18" height="12" fill="#f0f0f0" opacity="0.5"/><path d="M1029 148 L1032.5 151.5 L1036 148" fill="none" stroke="#a8a8a8" stroke-width="1.1"/><path d="M1001.5 173.5 H1012.5 L1017 178 L1012.5 182 H1001.5 L1005 178Z" fill="#dadada" stroke="#ababab" stroke-width="1"/><rect x="1008.5" y="179" width="12" height="9.5" fill="#f3f3f3" stroke="#ababab" stroke-width="1.1"/><path d="M1011 183 H1018 M1011 185.5 H1018" stroke="#ababab" stroke-width="0.9"/><path d="M1029 180 L1032.5 183.5 L1036 180" fill="none" stroke="#a8a8a8" stroke-width="1.1"/><path d="M784 158.7 H802 M784 163.7 H796 M784 168.7 H802 M784 173.7 H796" stroke="#ababab" stroke-width="1.3"/><path d="M816 158.7 H834 M819 163.7 H831 M816 168.7 H834 M819 173.7 H831" stroke="#ababab" stroke-width="1.3"/><path d="M848 158.7 H866 M854 163.7 H866 M848 168.7 H866 M854 173.7 H866" stroke="#ababab" stroke-width="1.3"/><path d="M880 158.7 H898 M880 163.7 H898 M880 168.7 H898 M880 173.7 H898" stroke="#ababab" stroke-width="1.3"/><path d="M906.7 152 V182" stroke="#d0d0d0" stroke-width="1"/><path d="M916 162.5 H922 M916 166.5 H922 M916 170.5 H922 M925.5 162.5 H931.5 M925.5 166.5 H931.5 M925.5 170.5 H931.5" stroke="#c0c0c0" stroke-width="1.2"/><path d="M942 166 L945.5 169.5 L949 166" fill="none" stroke="#a8a8a8" stroke-width="1.1"/><path d="M1041.5 214.5 V206 H1049.5 V214.5" fill="none" stroke="#b5b5b5" stroke-width="0.9"/><path d="M1043.5 208 L1049 213.5 M1046 213.5 H1049 V210.5" fill="none" stroke="#a5a5a5" stroke-width="0.9"/><rect x="1078" y="108.5" width="23" height="23.5" fill="#7fb7e8" stroke="#2b7cd3" stroke-width="1.3"/><circle cx="1099.6" cy="131" r="11.2" fill="#fafafa" stroke="#444" stroke-width="1.4"/><path d="M1091 175 L1094.5 178.5 L1098 175" fill="none" stroke="#444" stroke-width="1.1"/><rect x="1161.5" y="114.5" width="25" height="23.5" fill="#f8d98e" stroke="#e8821e" stroke-width="1.4"/><rect x="1157" y="108.7" width="14" height="14.3" fill="#fafafa" stroke="#555" stroke-width="1.3"/><rect x="1176.8" y="129.3" width="14.6" height="14" fill="#fafafa" stroke="#555" stroke-width="1.3"/><path d="M1170 175 L1173.5 178.5 L1177 175" fill="none" stroke="#444" stroke-width="1.1"/><rect x="1244.5" y="109" width="35" height="34" rx="2.5" fill="#f4f4f4" stroke="#c8c8c8" stroke-width="1.3"/><path d="M1256 142.5 Q1258 136 1263 137.5 L1281 121.5 Q1283 120.5 1282.5 123 L1266 140 Q1263 145 1256 142.5Z" fill="#dcdcdc" stroke="#b8b8b8" stroke-width="1"/><path d="M1279 177.5 L1282.5 181.0 L1286 177.5" fill="none" stroke="#b5b5b5" stroke-width="1.1"/><path d="M1313 110 L1318.5 107.5 L1323.5 117.5 L1316 121 L1310 115Z" fill="#f4f4f4" stroke="#a8a8a8" stroke-width="1.2"/><path d="M1318 110 Q1322 108 1324 113" fill="none" stroke="#a8a8a8" stroke-width="1.1"/><rect x="1306" y="122.5" width="20" height="4.5" fill="#b8b8b8"/><path d="M1448 115 L1451.3 118.5 L1454.6 115" fill="none" stroke="#a8a8a8" stroke-width="1.1"/><path d="M1307 140.5 V150 H1314 M1307 140.5 H1313" fill="none" stroke="#a8a8a8" stroke-width="1.2"/><path d="M1313 150 L1323 140 Q1325 139 1325.5 141 L1315.5 151.5 L1312 152Z" fill="#f4f4f4" stroke="#a8a8a8" stroke-width="1.1"/><rect x="1306" y="154.5" width="20" height="4.5" fill="#b8b8b8"/><path d="M1441 147 L1444.3 150.5 L1447.6 147" fill="none" stroke="#a8a8a8" stroke-width="1.1"/><path d="M1310 173.7 H1322 L1325.8 180 L1321.5 188 H1309.5 L1306.2 183Z" fill="#dcdcdc" stroke="#a8a8a8" stroke-width="1.1" stroke-linejoin="round"/><path d="M1310 173.7 H1322 L1316.5 183 H1306.2Z" fill="#eeeeee" stroke="#a8a8a8" stroke-width="1"/><path d="M1316.5 183 L1321.5 188" stroke="#a8a8a8" stroke-width="1"/><path d="M1306.2 183 L1309.5 188 H1321.5 L1316.5 183Z" fill="#c4c4c4"/><path d="M1453 179 L1456.3 182.5 L1459.6 179" fill="none" stroke="#a8a8a8" stroke-width="1.1"/><path d="M1468.5 214.5 V206 H1476.5 V214.5" fill="none" stroke="#b5b5b5" stroke-width="0.9"/><path d="M1470.5 208 L1476 213.5 M1473 213.5 H1476 V210.5" fill="none" stroke="#a5a5a5" stroke-width="0.9"/><circle cx="1510.8" cy="113.8" r="6.5" fill="#fafafa" stroke="#444" stroke-width="1.3"/><path d="M1506 118.6 L1499.3 125.5" stroke="#444" stroke-width="1.4"/><text x="1504.5" y="148.6" font-family="Liberation Sans" font-weight="700" font-size="11.5" fill="#a24bc6">b</text><text x="1509.8" y="158.8" font-family="Liberation Sans" font-weight="700" font-size="11" fill="#2a8ad4">c</text><path d="M1501.8 145.5 Q1497.5 150.5 1502 154 Q1504 155 1507.5 154.5 M1504.5 151.5 L1507.5 154.5 L1504.5 157.5" fill="none" stroke="#2a8ad4" stroke-width="1.4"/><path d="M1612 147.5 L1615.5 151.0 L1619 147.5" fill="none" stroke="#333" stroke-width="1.1"/><path d="M1500.3 172.5 L1513.5 184.5 L1507.5 184.8 L1510.5 191 L1508 192 L1505 185.8 L1500.8 189.5Z" fill="#fafafa" stroke="#444" stroke-width="1.2" stroke-linejoin="round"/><path d="M1596 179.5 L1599.5 183.0 L1603 179.5" fill="none" stroke="#333" stroke-width="1.1"/><rect x="1678" y="109" width="33.6" height="33.8" fill="none" stroke="#e06a3c" stroke-width="2"/><rect x="1681.8" y="112.6" width="11.5" height="11.5" fill="none" stroke="#e06a3c" stroke-width="1.6"/><rect x="1696.4" y="112.6" width="11.5" height="11.5" fill="none" stroke="#e06a3c" stroke-width="1.6"/><rect x="1681.8" y="127.6" width="11.5" height="11.5" fill="none" stroke="#e06a3c" stroke-width="1.6"/><rect x="1696.4" y="127.6" width="11.5" height="11.5" fill="none" stroke="#e06a3c" stroke-width="1.6"/><path d="M1882 212 L1888.5 205.7 L1895 212" fill="none" stroke="#333" stroke-width="1.2"/><path d="M283 237 L288.5 228.5 L294 237Z" fill="#6e6e6e" stroke="#6e6e6e" stroke-width="1" stroke-linejoin="round"/><path d="M283.5 988.5 L288.5 995.5 L293.5 988.5Z" fill="#6e6e6e" stroke="#6e6e6e" stroke-width="1" stroke-linejoin="round"/><polygon points="18.50,431.30 20.14,435.24 24.40,435.58 21.15,438.36 22.14,442.52 18.50,440.29 14.86,442.52 15.85,438.36 12.60,435.58 16.86,435.24" fill="#505050"/><polygon points="18.50,613.30 20.14,617.24 24.40,617.58 21.15,620.36 22.14,624.52 18.50,622.29 14.86,624.52 15.85,620.36 12.60,617.58 16.86,617.24" fill="#505050"/><path d="M9.5 434 H12 M9.5 437 H12 M9.5 440 H12 M9.5 616 H12 M9.5 619 H12 M9.5 622 H12" stroke="#777" stroke-width="0.8"/><path d="M1903 237 L1908.5 228.5 L1914 237Z" fill="#6e6e6e" stroke="#6e6e6e" stroke-width="1" stroke-linejoin="round"/><path d="M1903.5 879 L1908.5 886 L1913.5 879Z" fill="#6e6e6e" stroke="#6e6e6e" stroke-width="1" stroke-linejoin="round"/><path d="M1903.5 902 L1908.5 895.5 L1913.5 902Z M1903.5 909 L1908.5 902.5 L1913.5 909Z M1903.5 916.5 L1908.5 923 L1913.5 916.5Z M1903.5 923.5 L1908.5 930 L1913.5 923.5Z" fill="#6e6e6e" stroke="#6e6e6e" stroke-width="1" stroke-linejoin="round"/><path d="M1903.5 902 H1913.5 M1903.5 916.5 H1913.5" stroke="#6e6e6e" stroke-width="1.6"/><path d="M1266.2 1011.6 L1270 1008 L1273.8 1011.6" fill="none" stroke="#222" stroke-width="1.1"/><path d="M1260.3 1016.4 H1279.7 M1260.3 1021.4 H1279.7 M1260.3 1026.4 H1279.7" stroke="#222" stroke-width="1.1"/><path d="M1355.6 1008.8 H1372.4 V1020.8 H1360.5 L1357.8 1024.8 V1020.8 H1355.6Z" fill="none" stroke="#3a3a3a" stroke-width="1.2" stroke-linejoin="round"/><rect x="1491.5" y="1009.8" width="17" height="14.5" fill="none" stroke="#3a3a3a" stroke-width="1.2"/><path d="M1494.5 1010 V1024" stroke="#3a3a3a" stroke-width="1"/><rect x="1497.5" y="1012.5" width="8.5" height="6.5" fill="none" stroke="#3a3a3a" stroke-width="1"/><path d="M1494.5 1021.5 H1508" stroke="#3a3a3a" stroke-width="1"/><rect x="1541.5" y="1010" width="7" height="5.5" rx="1" fill="none" stroke="#3a3a3a" stroke-width="1.1"/><rect x="1551.5" y="1010" width="7" height="5.5" rx="1" fill="none" stroke="#3a3a3a" stroke-width="1.1"/><rect x="1541.5" y="1018.5" width="7" height="5.5" rx="1" fill="none" stroke="#3a3a3a" stroke-width="1.1"/><rect x="1551.5" y="1018.5" width="7" height="5.5" rx="1" fill="none" stroke="#3a3a3a" stroke-width="1.1"/><path d="M1599.2 1010 Q1595 1008.5 1591.5 1009.5 V1024 Q1595 1023 1599.2 1024.5 Q1603.5 1023 1607 1024 V1009.5 Q1603.5 1008.5 1599.2 1010 V1024.5" fill="none" stroke="#3a3a3a" stroke-width="1.1"/><path d="M1593.5 1013 H1597 M1593.5 1016 H1597 M1593.5 1019 H1597 M1601.5 1013 H1605 M1601.5 1016 H1605 M1601.5 1019 H1605" stroke="#3a3a3a" stroke-width="0.8"/><path d="M1640 1008.8 H1657" stroke="#3a3a3a" stroke-width="1.2"/><rect x="1641.3" y="1009" width="14.4" height="8" fill="none" stroke="#3a3a3a" stroke-width="1.1"/><path d="M1647 1011.5 H1651 V1014 H1647Z" fill="#3a3a3a"/><path d="M1648.5 1017 V1024.5 M1644.5 1024.8 H1652.5" stroke="#3a3a3a" stroke-width="1.1"/><path d="M1682 1016.8 H1692 M1829 1016.5 H1839 M1834 1011.5 V1021.5" stroke="#3a3a3a" stroke-width="1.1"/><path d="M1698 1017 H1823" stroke="#8a8a8a" stroke-width="1"/><rect x="1744" y="1010" width="6" height="14" rx="1" fill="#666"/><path d="M1760.5 1013 V1021" stroke="#777" stroke-width="1"/><rect x="1900" y="1012.2" width="8.2" height="9" fill="none" stroke="#3a3a3a" stroke-width="1.1"/><path d="M1898 1014.5 L1895.8 1016.8 L1898 1019 M1910.5 1014.5 L1912.7 1016.8 L1910.5 1019 M1901.8 1010 L1904.1 1007.8 L1906.4 1010 M1901.8 1023.5 L1904.1 1025.7 L1906.4 1023.5" fill="none" stroke="#3a3a3a" stroke-width="1.1"/><circle cx="291" cy="1011.5" r="2" fill="none" stroke="#333" stroke-width="1.1"/><path d="M283.5 1014.5 Q291 1016.5 298.5 1014.5 M291 1016 V1020 L286.5 1026.5 M291 1020 L294 1023" fill="none" stroke="#333" stroke-width="1.2"/><path d="M294.5 1021 L300.5 1027 M300.5 1021 L294.5 1027" stroke="#333" stroke-width="1.1"/><path d="M20.5 1046.3 L28.8 1045.2 V1054.6 H20.5Z M30.3 1045 L40 1043.7 V1054.6 H30.3Z M20.5 1056 H28.8 V1065.3 L20.5 1064.2Z M30.3 1056 H40 V1066.8 L30.3 1065.5Z" fill="#fff"/><circle cx="85" cy="1053" r="5.8" fill="none" stroke="#222" stroke-width="1.3"/><path d="M80.8 1057.4 L75 1063.5" stroke="#222" stroke-width="1.4"/><path d="M440.5 1045.5 H451 M440.5 1062.5 H451" stroke="#fff" stroke-width="1.2"/><rect x="442" y="1048.5" width="8" height="11" fill="none" stroke="#fff" stroke-width="1.4"/><path d="M458.5 1045 V1049 M458.5 1052 V1056 M458.5 1059 V1064" stroke="#fff" stroke-width="1.3"/><rect x="457" y="1051.5" width="3" height="3" fill="#fff"/><defs><linearGradient id="cop1" x1="0" y1="0" x2="0" y2="1"><stop offset="0" stop-color="#20b4ff"/><stop offset="0.45" stop-color="#30a0c0"/><stop offset="0.7" stop-color="#80c040"/><stop offset="1" stop-color="#ffc800"/></linearGradient><linearGradient id="cop2" x1="0" y1="0" x2="0" y2="1"><stop offset="0" stop-color="#b050f0"/><stop offset="0.5" stop-color="#f05a98"/><stop offset="1" stop-color="#ffb060"/></linearGradient></defs><path d="M506 1042.5 H519.5 Q521.5 1042.5 520.8 1045 L515 1060.5 H503 Q499.8 1060.5 500.5 1057 L503.5 1046 Q504.5 1042.5 506 1042.5Z" fill="url(#cop1)"/><path d="M518.5 1042.5 H521.5 Q524 1042.5 525.5 1045.5 L527 1049.5 H517.5Z" fill="#1a4ed8"/><path d="M506 1060.5 H515 L512.5 1067 H509.5 Q507 1067 506.5 1064Z" fill="#f05a30"/><path d="M520.5 1049 H527.5 Q530 1049 529.5 1052 L526 1064 Q525 1067 522 1067 H511.5 L517.2 1051.5 Q518 1049 520.5 1049Z" fill="url(#cop2)"/><path d="M562 1045.5 Q562 1043 564.5 1043 H571 L573.5 1045.5 H587 Q589.5 1045.5 589.5 1048 V1063.5 Q589.5 1065.7 587 1065.7 H564.5 Q562 1065.7 562 1063.5Z" fill="#f7cf4a"/><path d="M562 1045.5 Q562 1043 564.5 1043 H571 L574 1047.5 H562Z" fill="#e2a522"/><path d="M567.3 1065.7 V1058 Q567.3 1055.2 570 1055.2 H582.5 Q585.2 1055.2 585.2 1058 V1065.7 H580.5 V1060 H572 V1065.7Z" fill="#2a86d0"/><defs><radialGradient id="ff" cx="0.6" cy="0.3" r="0.8"><stop offset="0" stop-color="#ffd83a"/><stop offset="0.45" stop-color="#ff8a1e"/><stop offset="0.8" stop-color="#f0403a"/><stop offset="1" stop-color="#e02a6a"/></radialGradient></defs><path d="M638 1068.6 C629 1068.6 623.6 1062 623.6 1054.5 C623.6 1049 626 1046 628.5 1044.5 C628 1047 629 1049 630.5 1049.5 C632 1045.5 636 1043.5 640 1043.5 C643 1042 644 1040.5 644.5 1040 C645 1043 646.5 1044.5 648.5 1046.5 C651 1049 652 1052 652 1055 C652 1062.5 646 1068.6 638 1068.6Z" fill="url(#ff)"/><circle cx="638.5" cy="1055.5" r="6" fill="#7a3ad8"/><path d="M630.5 1052 Q636 1048.5 642 1050.5 Q637 1050 634.5 1053.5Z" fill="#ff9a2a"/><path d="M694 1041 H712 Q714.2 1041 714.2 1043.2 V1066 Q714.2 1068.2 712 1068.2 H694 Q691.8 1068.2 691.8 1066 V1043.2 Q691.8 1041 694 1041Z" fill="#41a5ee"/><rect x="691.8" y="1048" width="22.4" height="7" fill="#2b7cd3"/><rect x="691.8" y="1055" width="22.4" height="6.5" fill="#185abd"/><path d="M691.8 1061.5 H714.2 V1066 Q714.2 1068.2 712 1068.2 H694 Q691.8 1068.2 691.8 1066Z" fill="#103f91"/><rect x="684.7" y="1047" width="15.5" height="15.5" rx="1.5" fill="#185abd"/><text x="686.3" y="1059.5" font-family="Liberation Sans" font-weight="700" font-size="11.5" fill="#fff">W</text><circle cx="761.6" cy="1054.5" r="13.8" fill="#ed6c47"/><path d="M761.6 1040.7 A13.8 13.8 0 0 1 775.4 1054.5 L761.6 1054.5Z" fill="#ff8f6b"/><path d="M747.8 1054.5 A13.8 13.8 0 0 0 775.4 1054.5Z" fill="#c43e1c"/><rect x="747" y="1047" width="16.5" height="15.5" rx="1.5" fill="#c43e1c"/><text x="750.5" y="1059.5" font-family="Liberation Sans" font-weight="700" font-size="12" fill="#fff">P</text><rect x="551" y="1077.3" width="40" height="2.7" fill="#77b9ee"/><rect x="592" y="1077.3" width="9.5" height="2.7" fill="#4f86b2"/><rect x="613" y="1077.3" width="50.7" height="2.7" fill="#77b9ee"/><rect x="675" y="1077.3" width="40" height="2.7" fill="#77b9ee"/><rect x="716" y="1077.3" width="10" height="2.7" fill="#4f86b2"/><rect x="732" y="1077.3" width="61.2" height="2.7" fill="#88c4f2"/><defs><linearGradient id="sun" x1="0" y1="0" x2="1" y2="1"><stop offset="0" stop-color="#ffc62a"/><stop offset="1" stop-color="#f07a10"/></linearGradient><linearGradient id="cld" x1="0" y1="0" x2="0" y2="1"><stop offset="0" stop-color="#b8d8ff"/><stop offset="1" stop-color="#6aa0f0"/></linearGradient></defs><circle cx="1364.7" cy="1051" r="6.8" fill="url(#sun)"/><path d="M1347 1069 Q1342.8 1069 1343 1064.5 Q1343.5 1060 1348 1059.5 Q1349 1052 1356 1052 Q1361.5 1052 1363.5 1056.5 Q1368 1055.5 1370.5 1059 Q1373.5 1061 1373.2 1065 Q1372.8 1069 1368.5 1069Z" fill="url(#cld)"/><path d="M1580.5 1058.5 L1588.3 1050.7 L1596 1058.5" fill="none" stroke="#fff" stroke-width="1.3"/><circle cx="1618" cy="1055" r="10" fill="#f47a20"/><path d="M1610 1060 L1626 1050 M1611 1061.5 L1623 1047.5 M1613.5 1062 L1619.5 1046.5" stroke="#fff" stroke-width="1.6" stroke-linecap="round"/><rect x="1639.5" y="1051" width="17" height="9.3" fill="none" stroke="#fff" stroke-width="1.2"/><rect x="1641.5" y="1053" width="6.5" height="5.3" fill="#fff"/><rect x="1656.8" y="1053.5" width="1.8" height="4.3" fill="#fff"/><path d="M1672 1062 A14.5 14.5 0 0 1 1686.5 1047.8 M1675.3 1062 A11.2 11.2 0 0 1 1686.5 1051 M1678.6 1062 A7.9 7.9 0 0 1 1686.5 1054.3" fill="none" stroke="#fff" stroke-width="1.1"/><circle cx="1684.5" cy="1061" r="1.6" fill="#fff"/><path d="M1698.3 1051.5 H1702 L1707.5 1046.5 V1063.5 L1702 1058.5 H1698.3Z" fill="none" stroke="#fff" stroke-width="1.2" stroke-linejoin="round"/><path d="M1710.5 1052 Q1712.5 1055 1710.5 1058 M1713.5 1049 Q1717 1055 1713.5 1061 M1716.5 1046.5 Q1721.5 1055 1716.5 1063.5" fill="none" stroke="#fff" stroke-width="1.2"/><path d="M1869.3 1045 H1889.4 V1060.5 H1876 L1871.5 1064 V1060.5 H1869.3Z" fill="#fff"/><path d="M1872.5 1049 H1886 M1872.5 1052.3 H1886 M1872.5 1055.6 H1886" stroke="#2a2a2a" stroke-width="1.1"/><circle cx="1888.6" cy="1064.2" r="9.3" fill="#1f2326" stroke="#8a8a8a" stroke-width="1.2"/><text x="1885" y="1069.5" font-family="Liberation Sans" font-size="13" fill="#fff">1</text><path d="M1914.5 1030 V1080" stroke="#5a5f63" stroke-width="1"/></svg>
</body></html>
